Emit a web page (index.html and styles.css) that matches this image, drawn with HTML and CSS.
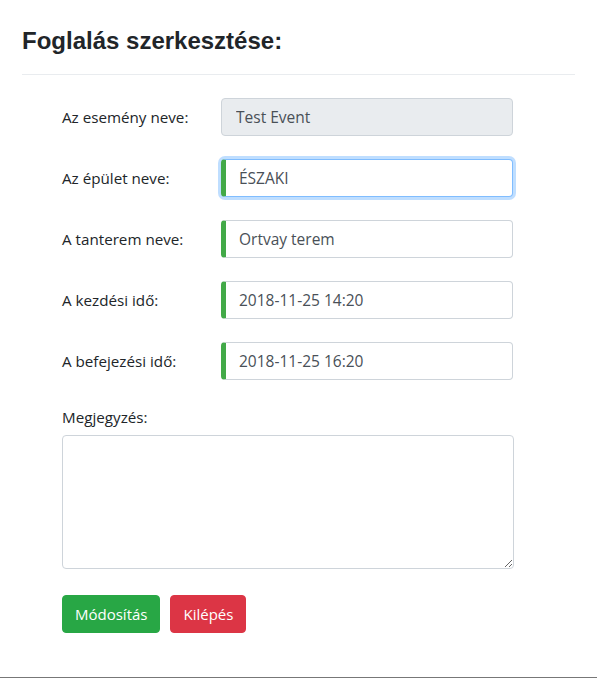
FILE: index.html
```html
<!DOCTYPE html>
<html lang="hu">
<head>
<meta charset="utf-8">
<title>Foglalás szerkesztése</title>
<link rel="stylesheet" href="styles.css">
</head>
<body>
<div class="modal">
  <div class="header">
    <h1 class="title">Foglalás szerkesztése:</h1>
  </div>
  <div class="divider"></div>
  <form class="form">
    <div class="row">
      <label class="label">Az esemény neve:</label>
      <input class="field disabled" type="text" value="Test Event" disabled>
    </div>
    <div class="row">
      <label class="label">Az épület neve:</label>
      <input class="field valid focused" type="text" value="ÉSZAKI">
    </div>
    <div class="row">
      <label class="label">A tanterem neve:</label>
      <input class="field valid" type="text" value="Ortvay terem">
    </div>
    <div class="row">
      <label class="label">A kezdési idő:</label>
      <input class="field valid" type="text" value="2018-11-25 14:20">
    </div>
    <div class="row last">
      <label class="label">A befejezési idő:</label>
      <input class="field valid" type="text" value="2018-11-25 16:20">
    </div>
    <label class="note-label">Megjegyzés:</label>
    <textarea class="note"></textarea>
    <div class="buttons">
      <button type="button" class="btn btn-success">Módosítás</button>
      <button type="button" class="btn btn-danger">Kilépés</button>
    </div>
  </form>
</div>
</body>
</html>
```
FILE: styles.css
```css
* { box-sizing: border-box; }
body {
  margin: 0;
  background: #fff;
  font-family: "Open Sans", "Noto Sans", sans-serif;
  font-size: 15.2px;
  color: #212529;
}
.modal {
  height: 678px;
  border-bottom: 1px solid #777;
}
.header {
  padding: 26px 22px 0;
}
.title {
  margin: 0;
  font-family: "Liberation Sans", Arial, sans-serif;
  font-size: 24px;
  font-weight: bold;
  line-height: 29px;
  color: #212529;
}
.divider {
  margin: 19px 22px 0;
  height: 1px;
  background: #e9ecef;
}
.form {
  padding: 23px 0 0 62px;
}
.row {
  display: flex;
  align-items: center;
  margin-bottom: 23px;
}
.row.last {
  margin-bottom: 25px;
}
.label {
  width: 159px;
  line-height: 24px;
}
.field {
  width: 292px;
  height: 38px;
  padding: 6px 12px 6px 14px;
  border: 1px solid #ced4da;
  border-radius: 4px;
  font-family: inherit;
  font-size: 15.5px;
  color: #495057;
  background: #fff;
  outline: none;
}
.field.disabled {
  background: #e9ecef;
}
.field.valid {
  border-left: 5px solid #42a948;
  padding-left: 13px;
}
.field.focused {
  border-color: #80bdff;
  border-left-color: #42a948;
  box-shadow: 0 0 0 3px rgba(0, 123, 255, 0.25);
}
.note-label {
  display: block;
  line-height: 24px;
}
.note {
  display: block;
  margin-top: 6px;
  width: 452px;
  height: 134px;
  border: 1px solid #ced4da;
  border-radius: 4px;
  font-family: inherit;
  font-size: 15px;
  color: #495057;
  outline: none;
}
.buttons {
  display: flex;
  gap: 10px;
  margin-top: 26px;
}
.btn {
  height: 38px;
  padding: 6px 12px;
  border: 1px solid transparent;
  border-radius: 4px;
  font-family: inherit;
  font-size: 15px;
  color: #fff;
}
.btn-success {
  background: #28a745;
  border-color: #28a745;
}
.btn-danger {
  background: #dc3545;
  border-color: #dc3545;
}
```
